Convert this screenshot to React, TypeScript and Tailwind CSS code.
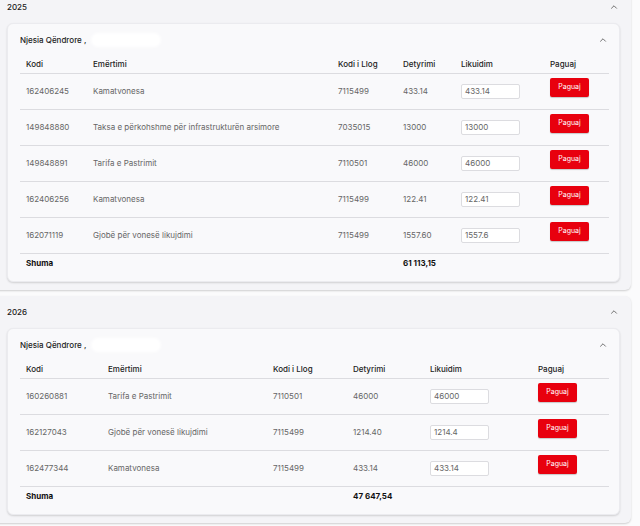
import { ChevronUp } from 'lucide-react';

type Row = { kodi: string; emertimi: string; llog: string; detyrimi: string; likuidim: string };

type Section = {
    year: string;
    total: string;
    widths: number[];
    rows: Row[];
};

const sections: Section[] = [
    {
        year: '2025',
        total: '61 113,15',
        widths: [67, 245, 65, 58, 89, 65],
        rows: [
            { kodi: '162406245', emertimi: 'Kamatvonesa', llog: '7115499', detyrimi: '433.14', likuidim: '433.14' },
            { kodi: '149848880', emertimi: 'Taksa e përkohshme për infrastrukturën arsimore', llog: '7035015', detyrimi: '13000', likuidim: '13000' },
            { kodi: '149848891', emertimi: 'Tarifa e Pastrimit', llog: '7110501', detyrimi: '46000', likuidim: '46000' },
            { kodi: '162406256', emertimi: 'Kamatvonesa', llog: '7115499', detyrimi: '122.41', likuidim: '122.41' },
            { kodi: '162071119', emertimi: 'Gjobë për vonesë likujdimi', llog: '7115499', detyrimi: '1557.60', likuidim: '1557.6' },
        ],
    },
    {
        year: '2026',
        total: '47 647,54',
        widths: [82, 165, 80, 77, 108, 77],
        rows: [
            { kodi: '160260881', emertimi: 'Tarifa e Pastrimit', llog: '7110501', detyrimi: '46000', likuidim: '46000' },
            { kodi: '162127043', emertimi: 'Gjobë për vonesë likujdimi', llog: '7115499', detyrimi: '1214.40', likuidim: '1214.4' },
            { kodi: '162477344', emertimi: 'Kamatvonesa', llog: '7115499', detyrimi: '433.14', likuidim: '433.14' },
        ],
    },
];

const headers = ['Kodi', 'Emërtimi', 'Kodi i Llog', 'Detyrimi', 'Likuidim', 'Paguaj'];

const YearPanel = ({ section, first }: { section: Section; first: boolean }) => (
    <div className={`-ml-2 w-[639px] rounded-md bg-[#f4f4f7] shadow-[0_1px_2px_rgba(0,0,0,0.18)] pb-2 ${first ? '-mt-[9px]' : 'mt-[6px]'}`}>
        <div className="h-8 flex items-center justify-between pl-[15px] pr-[12px]">
            <span className="text-[8px] font-medium text-[#222]">{section.year}</span>
            <ChevronUp size={10} strokeWidth={2} className="text-[#555]" />
        </div>
        <div className="ml-[15px] w-[613px] rounded-md bg-[#f9f9fb] border border-[#ebebef] shadow-[0_1px_2px_rgba(0,0,0,0.15)] px-3 pb-2">
            <div className="h-[31px] flex items-center justify-between">
                <div className="flex items-center">
                    <span className="text-[8px] font-medium text-[#222]">Njesia Qëndrore ,</span>
                    <span className="ml-[5px] inline-block w-[70px] h-[14px] rounded-full bg-white blur-[1.5px]" />
                </div>
                <ChevronUp size={10} strokeWidth={2} className="text-[#555] mr-[-1px]" />
            </div>
            <table className="w-[589px] table-fixed border-collapse text-[8px]">
                <colgroup>
                    {section.widths.map((w, i) => (
                        <col key={i} style={{ width: w }} />
                    ))}
                </colgroup>
                <thead>
                    <tr className="h-[18px] border-b border-[#dcdce0]">
                        {headers.map((h) => (
                            <th key={h} className="px-[6px] text-left align-top font-medium text-[#222] leading-[10px] pt-[4px]">{h}</th>
                        ))}
                    </tr>
                </thead>
                <tbody>
                    {section.rows.map((r) => (
                        <tr key={r.kodi} className="h-[36px] border-b border-[#dcdce0] text-[#666]">
                            <td className="px-[6px]">{r.kodi}</td>
                            <td className="px-[6px] whitespace-nowrap">{r.emertimi}</td>
                            <td className="px-[6px]">{r.llog}</td>
                            <td className="px-[6px]">{r.detyrimi}</td>
                            <td className="px-[6px]">
                                <div className="w-[59px] h-[15px] bg-white border border-[#dcdce0] rounded-[2px] flex items-center px-[3px] text-[#666]">{r.likuidim}</div>
                            </td>
                            <td className="px-[6px]">
                                <button className="w-[39px] h-[19px] mb-2 bg-[#e8000e] rounded-[2px] text-white text-[7px] shadow-[0_1px_1px_rgba(0,0,0,0.2)]">Paguaj</button>
                            </td>
                        </tr>
                    ))}
                    <tr className="h-[20px]">
                        <td className="px-[6px] font-bold text-[#111]">Shuma</td>
                        <td />
                        <td />
                        <td className="px-[6px] font-bold text-[#111] whitespace-nowrap">{section.total}</td>
                        <td />
                        <td />
                    </tr>
                </tbody>
            </table>
        </div>
    </div>
);

export default function App() {
    return (
        <div className="w-[640px] h-[526px] overflow-hidden bg-[#fbfbfc] font-['Inter',sans-serif]">
            {sections.map((s, i) => (
                <YearPanel key={s.year} section={s} first={i === 0} />
            ))}
        </div>
    );
}
